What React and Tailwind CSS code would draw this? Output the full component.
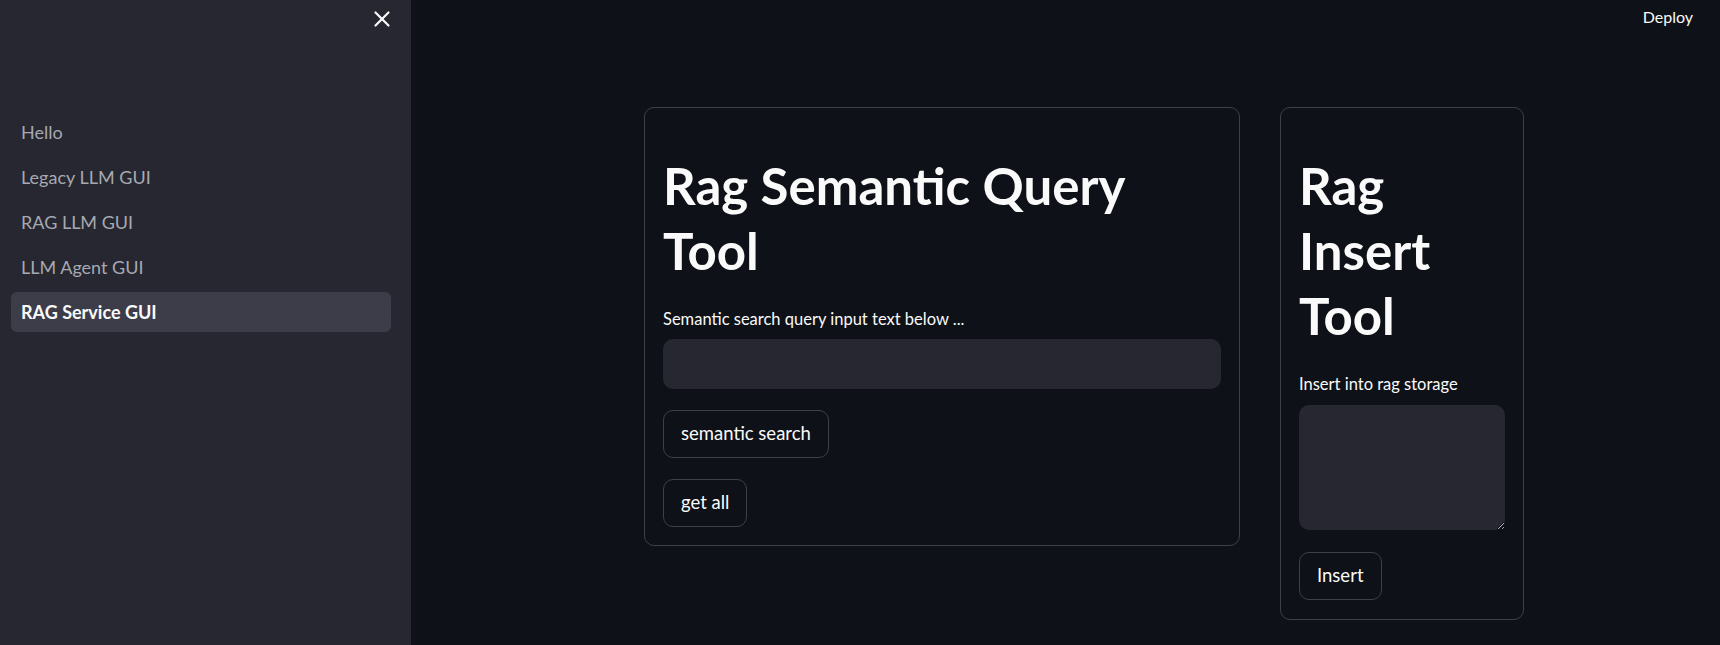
import { X } from 'lucide-react';

const pages = ['Hello', 'Legacy LLM GUI', 'RAG LLM GUI', 'LLM Agent GUI', 'RAG Service GUI'];

function Sidebar() {
  return (
    <aside className="w-[411px] shrink-0 bg-[#262730] flex flex-col">
      <div className="flex justify-end pr-[16px] pt-[6px]">
        <button className="text-[#fafafa]">
          <X size={26} strokeWidth={2} />
        </button>
      </div>
      {/* page links */}
      <nav className="mt-[80px] pl-[11px] pr-[20px] flex flex-col gap-[5px]">
        {pages.map((p) => {
          const active = p === 'RAG Service GUI';
          return (
            <div
              key={p}
              className={
                active
                  ? 'h-[40px] flex items-center pl-[10px] rounded-[6px] bg-[#3c3d49] text-[#fafafa] font-bold text-[18px]'
                  : 'h-[40px] flex items-center pl-[10px] rounded-[6px] text-[#a7a9b2] text-[18px]'
              }
            >
              {p}
            </div>
          );
        })}
      </nav>
    </aside>
  );
}

function Btn({ children }) {
  return (
    <button className="self-start h-[48px] px-[17px] rounded-[10px] border border-[#3d4044] bg-[#0e1117] text-[#fafafa] text-[18.5px]">
      {children}
    </button>
  );
}

function QueryCard() {
  return (
    <div className="w-[596px] shrink-0 rounded-[10px] border border-[#3d4044] p-[18px] flex flex-col">
      <h1 className="pt-[27px] max-w-[510px] text-[51px] leading-[65px] font-bold text-[#fafafa]">Rag Semantic Query Tool</h1>
      <label className="mt-[23px] text-[16.5px] leading-[26px] text-[#fafafa]">Semantic search query input text below ...</label>
      <input className="mt-[7px] h-[50px] w-full rounded-[10px] bg-[#262730] px-[14px] text-[#fafafa] outline-none" />
      <div className="mt-[21px] flex">
        <Btn>semantic search</Btn>
      </div>
      <div className="mt-[21px] flex">
        <Btn>get all</Btn>
      </div>
    </div>
  );
}

function InsertCard() {
  return (
    <div className="w-[244px] shrink-0 rounded-[10px] border border-[#3d4044] px-[18px] pt-[18px] pb-[19px] flex flex-col">
      <h1 className="pt-[27px] text-[51px] leading-[65px] font-bold text-[#fafafa]">Rag Insert Tool</h1>
      <label className="mt-[23px] text-[16.5px] leading-[26px] text-[#fafafa]">Insert into rag storage</label>
      <textarea className="mt-[8px] h-[125px] w-full rounded-[10px] bg-[#262730] p-[12px] text-[#fafafa] outline-none resize-y" />
      <div className="mt-[22px] flex">
        <Btn>Insert</Btn>
      </div>
    </div>
  );
}

export default function App() {
  return (
    <div className="flex h-[645px] w-full overflow-hidden bg-[#0e1117] font-['Lato',sans-serif]">
      <Sidebar />
      <main className="flex-1 flex flex-col">
        <header className="h-[34px] flex justify-end items-start pt-[5px] pr-[27px]">
          <span className="text-[16px] leading-[24px] text-[#fafafa]">Deploy</span>
        </header>
        <div className="pt-[73px] pl-[233px] flex items-start gap-[40px]">
          <QueryCard />
          <InsertCard />
        </div>
      </main>
    </div>
  );
}
